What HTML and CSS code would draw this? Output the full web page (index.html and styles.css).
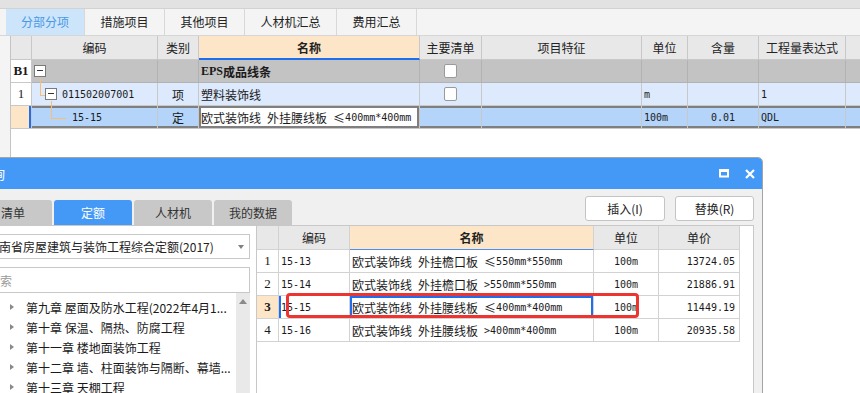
FILE: index.html
```html
<!DOCTYPE html>
<html lang="zh-CN">
<head>
    <meta charset="UTF-8">
    <title>分部分项 - 查询</title>
    <link rel="stylesheet" href="styles.css">
</head>
<body>
    <div class="app">
        <div class="topbar"></div>

        <div class="tabstrip">
            <div class="tab active" style="width:79px">分部分项</div>
            <div class="tab" style="width:80px">措施项目</div>
            <div class="tab" style="width:80px">其他项目</div>
            <div class="tab" style="width:92px">人材机汇总</div>
            <div class="tab" style="width:80px">费用汇总</div>
        </div>

        <div class="workspace">
            <div class="side"></div>
            <div class="grid">
                <div class="g-row g-head">
                    <div class="c"></div>
                    <div class="c">编码</div>
                    <div class="c">类别</div>
                    <div class="c c-name">名称</div>
                    <div class="c">主要清单</div>
                    <div class="c">项目特征</div>
                    <div class="c">单位</div>
                    <div class="c">含量</div>
                    <div class="c">工程量表达式</div>
                    <div class="c"></div>
                </div>

                <div class="g-row r-group">
                    <div class="c rn bold">B1</div>
                    <div class="c code-b1"><span class="fold"></span></div>
                    <div class="c"></div>
                    <div class="c bold"><span class="n">EPS</span>成品线条</div>
                    <div class="c center"><span class="check"></span></div>
                    <div class="c"></div>
                    <div class="c"></div>
                    <div class="c"></div>
                    <div class="c"></div>
                    <div class="c"></div>
                </div>

                <div class="g-row r-item">
                    <div class="c rn">1</div>
                    <div class="c code-l1"><span class="fold"></span><span class="n">011502007001</span></div>
                    <div class="c center">项</div>
                    <div class="c">塑料装饰线</div>
                    <div class="c center"><span class="check"></span></div>
                    <div class="c"></div>
                    <div class="c n">m</div>
                    <div class="c"></div>
                    <div class="c n">1</div>
                    <div class="c"></div>
                </div>

                <div class="g-row r-sel">
                    <div class="c rn"></div>
                    <div class="c code-l2"><span class="n">15-15</span></div>
                    <div class="c center">定</div>
                    <div class="c edit">欧式装饰线<span class="n"> </span>外挂腰线板<span class="n"> </span>≤<span class="n">400mm*400mm</span></div>
                    <div class="c"></div>
                    <div class="c"></div>
                    <div class="c n">100m</div>
                    <div class="c n center">0.01</div>
                    <div class="c n">QDL</div>
                    <div class="c"></div>
                </div>
            </div>
        </div>

        <!-- floating query window -->
        <div class="dialog">
            <div class="dlg-title">
                <span>查询</span>
                <div class="dlg-icons">
                    <svg width="10" height="9" viewBox="0 0 10 9"><rect x="1" y="1.5" width="8" height="6" fill="none" stroke="#fff" stroke-width="2"/><rect x="0" y="0" width="10" height="3" fill="#fff"/></svg>
                    <svg width="10" height="10" viewBox="0 0 10 10"><path d="M1 1 L9 9 M9 1 L1 9" stroke="#fff" stroke-width="2.2" fill="none"/></svg>
                </div>
            </div>

            <div class="dlg-toolbar">
                <div class="dlg-tab">清单</div>
                <div class="dlg-tab active">定额</div>
                <div class="dlg-tab">人材机</div>
                <div class="dlg-tab">我的数据</div>
                <div class="dlg-buttons">
                    <button class="btn" style="width:80px">插入(I)</button>
                    <button class="btn" style="width:79px">替换(R)</button>
                </div>
            </div>

            <div class="dlg-content">
                <div class="lib-panel">
                    <div class="select">
                        <span>河南省房屋建筑与装饰工程综合定额(2017)</span>
                        <span class="caret"></span>
                    </div>
                    <div class="search">搜索</div>
                    <div class="tree">
                        <div class="tree-list">
                            <div class="tree-item"><span class="arrow"></span>第九章 屋面及防水工程(2022年4月1...</div>
                            <div class="tree-item"><span class="arrow"></span>第十章 保温、隔热、防腐工程</div>
                            <div class="tree-item"><span class="arrow"></span>第十一章 楼地面装饰工程</div>
                            <div class="tree-item"><span class="arrow"></span>第十二章 墙、柱面装饰与隔断、幕墙...</div>
                            <div class="tree-item"><span class="arrow"></span>第十三章 天棚工程</div>
                        </div>
                        <div class="scrollbar"><span class="up"></span></div>
                    </div>
                </div>

                <div class="result-panel">
                    <div class="q-row q-head">
                        <div class="c"></div>
                        <div class="c">编码</div>
                        <div class="c c-name">名称</div>
                        <div class="c">单位</div>
                        <div class="c">单价</div>
                    </div>
                    <div class="q-row">
                        <div class="c rn">1</div>
                        <div class="c n">15-13</div>
                        <div class="c">欧式装饰线<span class="n"> </span>外挂檐口板<span class="n"> </span>≤<span class="n">550mm*550mm</span></div>
                        <div class="c n center">100m</div>
                        <div class="c n right">13724.05</div>
                    </div>
                    <div class="q-row">
                        <div class="c rn">2</div>
                        <div class="c n">15-14</div>
                        <div class="c">欧式装饰线<span class="n"> </span>外挂檐口板<span class="n"> &gt;550mm*550mm</span></div>
                        <div class="c n center">100m</div>
                        <div class="c n right">21886.91</div>
                    </div>
                    <div class="q-row q-sel">
                        <div class="c rn bold">3</div>
                        <div class="c n">15-15</div>
                        <div class="c">欧式装饰线<span class="n"> </span>外挂腰线板<span class="n"> </span>≤<span class="n">400mm*400mm</span></div>
                        <div class="c n center">100m</div>
                        <div class="c n right">11449.19</div>
                    </div>
                    <div class="q-row">
                        <div class="c rn">4</div>
                        <div class="c n">15-16</div>
                        <div class="c">欧式装饰线<span class="n"> </span>外挂腰线板<span class="n"> &gt;400mm*400mm</span></div>
                        <div class="c n center">100m</div>
                        <div class="c n right">20935.58</div>
                    </div>

                    <div class="mark"></div>
                </div>
            </div>
        </div>
    </div>
</body>
</html>
```

FILE: styles.css
```css
* {
    margin: 0;
    padding: 0;
    box-sizing: border-box;
}

body {
    width: 860px;
    height: 393px;
    overflow: hidden;
    background: #fff;
    color: #1a1a1a;
    font-family: "Noto Sans CJK SC", sans-serif;
    font-size: 12px;
}

.app {
    position: relative;
    height: 393px;
    overflow: hidden;
}

.topbar {
    height: 9px;
    background: #e2e2e2;
    border-bottom: 1px solid #d2d2d2;
}

.tabstrip {
    display: flex;
    height: 27px;
    padding-left: 6px;
    background: #f4f4f4;
    border-bottom: 1px solid #d6d6d6;
}

.tab {
    height: 26px;
    line-height: 26px;
    text-align: center;
    border-right: 1px solid #d8d8d8;
    color: #222;
}

.tab.active {
    background: #cde5fa;
    color: #4a98e6;
}

.workspace {
    display: flex;
    height: 357px;
}

.side {
    flex-shrink: 0;
    width: 11px;
    background: #f4f4f4;
    border-right: 1px solid #c4c4c4;
}

.grid {
    flex: 1;
    min-width: 0;
    overflow: hidden;
}

/* shared cell */
.c {
    display: flex;
    align-items: center;
    position: relative;
    padding: 0 2px;
    white-space: pre;
    border-right: 1px solid #c8c8c8;
    border-bottom: 1px solid #c8c8c8;
}

.center {
    justify-content: center;
}

.right {
    justify-content: flex-end;
    padding-right: 4px;
}

.bold {
    font-weight: bold;
}

.n {
    font-family: "DejaVu Sans Mono", monospace;
    font-size: 10px;
}

.rn {
    justify-content: center;
    font-family: "Liberation Serif", serif;
    font-size: 13px;
    background: #fff;
}

.g-row {
    display: grid;
    grid-template-columns: 21px 126px 41px 221px 62px 160px 46px 71px 87px 60px;
    height: 23px;
}

.g-head {
    height: 24px;
}

.g-head .c {
    justify-content: center;
    background: #e8e8e8;
    color: #222;
}

.g-head .c-name {
    background: #fde6c8;
    font-weight: bold;
    border-bottom: 2px solid #1e6ff0;
}

.r-group .c {
    background: #c3c3c3;
    border-color: #b2b2b2;
}

.r-group .c.rn {
    background: #fff;
    border-color: #c8c8c8;
}

.r-group .n {
    font-family: "Liberation Serif", serif;
    font-size: 12px;
    font-weight: bold;
}

.r-item .c {
    background: #dde9fc;
}

.r-item .c.rn {
    background: #fff;
}

.r-sel .c {
    background: #b4d4fa;
    box-shadow: inset 0 2px #7f7f7f, inset 0 -2px #7f7f7f;
}

.r-sel .c.rn {
    background: #fde6c8;
    box-shadow: inset -2px 0 #1e6ff0;
}

.r-sel .c.edit {
    background: #fff;
    box-shadow: inset 0 0 0 2px #7f7f7f;
}

/* tree column */
.fold {
    position: relative;
    width: 12px;
    height: 12px;
    background: #fff;
    border: 1px solid #7a7a7a;
}

.fold::after {
    content: "";
    position: absolute;
    left: 2px;
    top: 4px;
    width: 6px;
    height: 1px;
    background: #333;
}

.code-b1 {
    padding-left: 2px;
}

.code-l1 {
    padding-left: 13px;
    gap: 5px;
}

.code-l1::before {
    content: "";
    position: absolute;
    left: 8px;
    top: -5px;
    width: 5px;
    height: 17px;
    border-left: 1px solid #f7be78;
    border-bottom: 1px solid #f7be78;
}

.code-l2 {
    padding-left: 40px;
}

.code-l2::before {
    content: "";
    position: absolute;
    left: 19px;
    top: -5px;
    width: 14px;
    height: 17px;
    border-left: 1px solid #f7be78;
    border-bottom: 1px solid #f7be78;
}

.check {
    width: 13px;
    height: 14px;
    background: #fff;
    border: 1px solid #9a9a9a;
    border-radius: 2px;
}

/* dialog window */
.dialog {
    position: absolute;
    left: -30px;
    top: 157px;
    width: 793px;
    height: 260px;
    background: #f0f0f0;
    border: 1px solid #a4a4a4;
    border-radius: 5px 5px 0 0;
    overflow: hidden;
}

.dlg-title {
    display: flex;
    align-items: center;
    height: 31px;
    padding: 0 7px 0 8px;
    background: #4499f7;
    color: #fff;
    font-size: 13px;
}

.dlg-icons {
    display: flex;
    align-items: center;
    gap: 16px;
    margin-left: auto;
}

.dlg-toolbar {
    display: flex;
    align-items: flex-end;
    height: 36px;
    padding: 0 8px 0 3px;
}

.dlg-tab {
    width: 78px;
    height: 25px;
    line-height: 25px;
    margin-right: 2px;
    text-align: center;
    background: #c8c8c8;
    border-radius: 3px 3px 0 0;
    color: #333;
}

.dlg-tab.active {
    background: #4499f7;
    color: #fff;
}

.dlg-buttons {
    display: flex;
    gap: 10px;
    margin-left: auto;
    align-self: flex-start;
    margin-top: 7px;
}

.btn {
    height: 25px;
    background: #fff;
    border: 1px solid #c4c4c4;
    border-radius: 3px;
    font-family: "Noto Sans CJK SC", sans-serif;
    font-size: 12px;
    color: #222;
}

.dlg-content {
    display: flex;
    height: 200px;
    margin-right: 8px;
    background: #fff;
    border-top: 1px solid #c8c8c8;
}

.lib-panel {
    flex-shrink: 0;
    width: 285px;
    padding: 8px 6px 0 9px;
}

.select {
    display: flex;
    align-items: center;
    height: 25px;
    padding-left: 6px;
    border: 1px solid #c8c8c8;
    color: #222;
    white-space: nowrap;
}

.caret {
    margin-left: auto;
    margin-right: 5px;
    border-top: 4px solid #808080;
    border-left: 3.5px solid transparent;
    border-right: 3.5px solid transparent;
}

.search {
    display: flex;
    align-items: center;
    height: 26px;
    margin-top: 8px;
    padding-left: 7px;
    border: 1px solid #c8c8c8;
    color: #9a9a9a;
}

.tree {
    display: flex;
    height: 120px;
}

.tree-list {
    flex: 1;
    padding-top: 4px;
}

.tree-item {
    display: flex;
    align-items: center;
    height: 20px;
    padding-left: 30px;
    white-space: nowrap;
    color: #1a1a1a;
}

.arrow {
    margin-right: 12px;
    border-left: 4px solid #8a8a8a;
    border-top: 3.5px solid transparent;
    border-bottom: 3.5px solid transparent;
}

.scrollbar {
    display: flex;
    justify-content: center;
    width: 14px;
    background: #e9e9e9;
}

.up {
    margin-top: 6px;
    height: 0;
    border-bottom: 5px solid #8a8a8a;
    border-left: 4.5px solid transparent;
    border-right: 4.5px solid transparent;
}

.result-panel {
    position: relative;
    flex: 1;
    border-left: 1px solid #c8c8c8;
    border-right: 1px solid #c8c8c8;
}

.q-row {
    display: grid;
    grid-template-columns: 22px 71px 244px 65px 81px;
    height: 23px;
}

.q-row .c {
    border-color: #d2d2d2;
}

.q-head {
    height: 24px;
}

.q-head .c {
    justify-content: center;
    background: #e8e8e8;
    color: #222;
}

.q-head .c-name {
    background: #fde6c8;
    font-weight: bold;
    border-bottom: 1px solid #4a8ef0;
}

.q-sel .c.rn {
    background: #fde6c8;
}

.q-sel .c:nth-child(2) {
    box-shadow: inset 2px 0 #1e6ff0;
}

.q-sel .c:nth-child(3) {
    box-shadow: inset 0 0 0 2px #1e6ff0;
}

/* red annotation round the chosen row */
.mark {
    position: absolute;
    left: 29px;
    top: 67px;
    width: 353px;
    height: 25px;
    border: 3px solid #ec3530;
    border-radius: 4px;
}
```
